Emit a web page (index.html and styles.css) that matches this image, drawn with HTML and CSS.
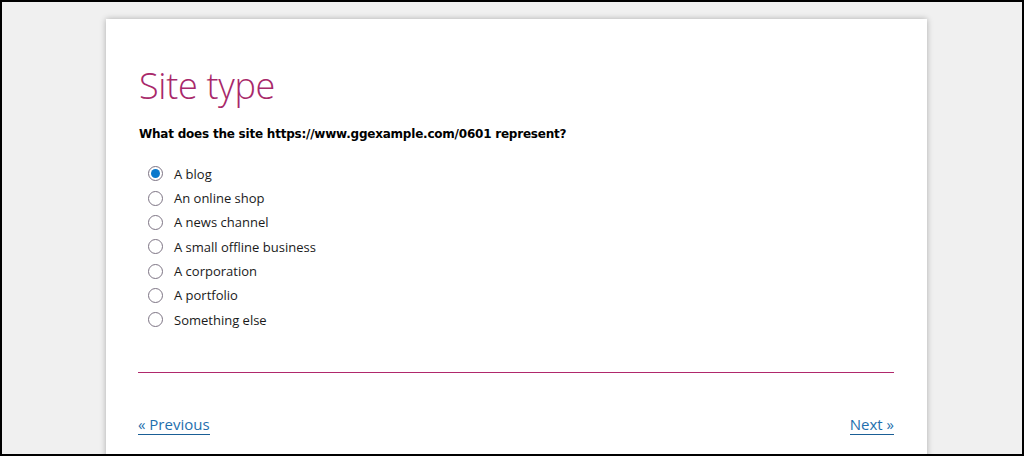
FILE: index.html
```html
<!DOCTYPE html>
<html lang="en">
<head>
    <meta charset="UTF-8">
    <title>Site type</title>
    <link rel="stylesheet" href="styles.css">
</head>
<body>
    <div class="frame">
        <div class="card">
            <h1 class="title">Site type</h1>
            <p class="question">What does the site https://www.ggexample.com/0601 represent?</p>

            <!-- Options -->
            <ul class="options">
                <li class="option checked"><span class="radio"></span>A blog</li>
                <li class="option"><span class="radio"></span>An online shop</li>
                <li class="option"><span class="radio"></span>A news channel</li>
                <li class="option"><span class="radio"></span>A small offline business</li>
                <li class="option"><span class="radio"></span>A corporation</li>
                <li class="option"><span class="radio"></span>A portfolio</li>
                <li class="option"><span class="radio"></span>Something else</li>
            </ul>

            <div class="divider"></div>

            <div class="nav">
                <a href="#" class="nav-link">« Previous</a>
                <a href="#" class="nav-link">Next »</a>
            </div>
        </div>
    </div>
</body>
</html>
```

FILE: styles.css
```css
* {
    margin: 0;
    padding: 0;
    box-sizing: border-box;
}
body {
    font-family: "Open Sans", Arial, sans-serif;
    background-color: #000;
}
.frame {
    height: 456px;
    border: 2px solid #000;
    background-color: #f0f0f0;
    overflow: hidden;
}
.card {
    width: 821px;
    height: 500px;
    margin: 17px 0 0 104px;
    padding: 0 33px 0 32px;
    background-color: #fff;
    box-shadow: 0 0 6px rgba(0, 0, 0, 0.28);
}
.title {
    padding-top: 42px;
    padding-left: 1px;
    font-size: 36px;
    font-weight: 300;
    letter-spacing: -0.3px;
    line-height: 50px;
    color: #a8286a;
}
.question {
    margin-top: 16px;
    padding-left: 1px;
    font-family: "DejaVu Sans", Verdana, sans-serif;
    font-size: 12px;
    font-weight: bold;
    letter-spacing: -0.22px;
    line-height: 14px;
    color: #000;
}
.options {
    list-style: none;
    margin-top: 20px;
    padding-left: 10px;
}
.option {
    display: flex;
    align-items: center;
    height: 24px;
    font-size: 13px;
    color: #1a1a1a;
}
.option:nth-child(3n+1) {
    height: 25px;
}
.radio {
    width: 15px;
    height: 15px;
    margin-right: 11px;
    border: 1px solid #7d7484;
    border-radius: 50%;
    display: flex;
    align-items: center;
    justify-content: center;
}
.option.checked .radio::after {
    content: "";
    width: 9px;
    height: 9px;
    border-radius: 50%;
    background-color: #0a78cc;
}
.divider {
    margin-top: 40px;
    border-top: 1px solid #b0286c;
}
.nav {
    display: flex;
    justify-content: space-between;
    margin-top: 42px;
}
.nav-link {
    font-size: 15px;
    color: #1f6fae;
    text-decoration: none;
    border-bottom: 1px solid #1a5f96;
    line-height: 19px;
}
```
